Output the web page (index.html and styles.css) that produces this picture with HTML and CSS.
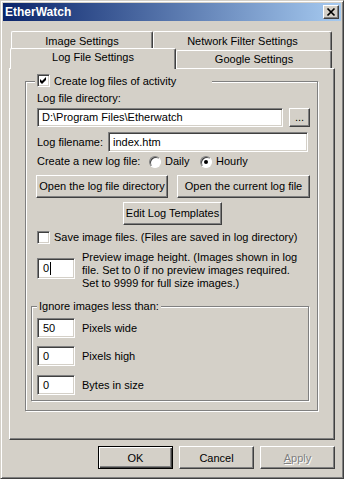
FILE: index.html
```html
<!DOCTYPE html>
<html>
<head>
<meta charset="utf-8">
<title>EtherWatch</title>
<link rel="stylesheet" href="styles.css">
</head>
<body>
<div class="window">
  <div class="titlebar">
    <span class="title">EtherWatch</span>
    <div class="close">
      <svg width="14" height="12" viewBox="0 0 14 12"><path d="M3.5 2.5 L10.5 9.5 M10.5 2.5 L3.5 9.5" stroke="#000" stroke-width="1.7" fill="none"/></svg>
    </div>
  </div>
  <div class="tabs">
    <div class="tabrow row1">
      <div class="tab t-image">Image Settings</div>
      <div class="tab t-network">Network Filter Settings</div>
    </div>
    <div class="tabrow row2">
      <div class="tab t-log">Log File Settings</div>
      <div class="tab t-google">Google Settings</div>
    </div>
  </div>
  <div class="panel">
    <fieldset class="group main">
      <legend class="check-legend"><span class="checkbox"><svg width="11" height="11" viewBox="0 0 11 11"><path d="M2 4 L4 6 L8 2 L8 5 L4 9 L2 7 Z" fill="#000"/></svg></span><span>Create log files of activity</span></legend>
      <div class="label">Log file directory:</div>
      <div class="row dir-row">
        <div class="edit dir">D:\Program Files\Etherwatch</div>
        <div class="btn browse">...</div>
      </div>
      <div class="row file-row">
        <span class="file-label">Log filename:</span>
        <div class="edit filename">index.htm</div>
      </div>
      <div class="row radio-row">
        <span class="radio-label">Create a new log file:</span>
        <span class="opt daily"><span class="radio"></span>Daily</span>
        <span class="opt"><span class="radio on"></span>Hourly</span>
      </div>
      <div class="row btn-row">
        <div class="btn first">Open the log file directory</div>
        <div class="btn second">Open the current log file</div>
      </div>
      <div class="btn templates">Edit Log Templates</div>
      <div class="row save-row">
        <span class="checkbox"></span>
        <span>Save image files. (Files are saved in log directory)</span>
      </div>
      <div class="row preview-row">
        <div class="edit small preview">0<span class="caret"></span></div>
        <div class="preview-text">Preview image height. (Images shown in log<br>file. Set to 0 if no preview images required.<br>Set to 9999 for full size images.)</div>
      </div>
      <fieldset class="group ignore">
        <legend class="plain-legend">Ignore images less than:</legend>
        <div class="row size-row r1"><div class="edit small">50</div><span>Pixels wide</span></div>
        <div class="row size-row r2"><div class="edit small">0</div><span>Pixels high</span></div>
        <div class="row size-row r3"><div class="edit small">0</div><span>Bytes in size</span></div>
      </fieldset>
    </fieldset>
  </div>
  <div class="actions">
    <div class="btn action default">OK</div>
    <div class="btn action">Cancel</div>
    <div class="btn action disabled"><span><u>A</u>pply</span></div>
  </div>
</div>
</body>
</html>
```
FILE: styles.css
```css
html, body {
  margin: 0;
  padding: 0;
  background: #d4d0c8;
}
body {
  font-family: "Liberation Sans", Arial, sans-serif;
  font-size: 11px;
  color: #000;
}
.window {
  box-sizing: border-box;
  width: 344px;
  height: 479px;
  background: #d4d0c8;
  border: 1px solid;
  border-color: #d4d0c8 #404040 #404040 #d4d0c8;
  box-shadow: inset 1px 1px #fff, inset -1px -1px #808080;
  padding: 2px;
  display: flex;
  flex-direction: column;
}
.titlebar {
  height: 18px;
  flex: none;
  display: flex;
  align-items: center;
  justify-content: space-between;
  padding: 0 2px;
  background: linear-gradient(to right, #0a246a, #a6caf0);
}
.title {
  color: #fff;
  font-weight: bold;
  font-size: 12px;
}
.close {
  box-sizing: border-box;
  width: 16px;
  height: 14px;
  background: #d4d0c8;
  border: 1px solid;
  border-color: #fff #404040 #404040 #fff;
  box-shadow: inset -1px -1px #808080;
  display: flex;
}
.tabs {
  margin-top: 10px;
  flex: none;
}
.tabrow {
  display: flex;
}
.row1 {
  height: 19px;
  margin-left: 8px;
}
.row2 {
  height: 18px;
  margin-left: 7px;
}
.tab {
  box-sizing: border-box;
  background: #d4d0c8;
  border-left: 1px solid #fff;
  border-top: 1px solid #fff;
  border-right: 1px solid #404040;
  box-shadow: inset -1px 0 #808080;
  border-radius: 2px 2px 0 0;
  text-align: center;
  white-space: nowrap;
}
.row1 .tab {
  height: 19px;
  line-height: 18px;
}
.t-image { width: 142px; }
.t-network { width: 179px; }
.t-log {
  width: 166px;
  height: 21px;
  margin-top: -2px;
  line-height: 17px;
  position: relative;
  z-index: 1;
}
.t-google {
  width: 156px;
  height: 18px;
  line-height: 17px;
}
.panel {
  box-sizing: border-box;
  height: 372px;
  margin: 0 6px;
  flex: none;
  border: 1px solid;
  border-color: #fff #404040 #404040 #fff;
  box-shadow: inset -1px -1px #808080;
}
.group {
  box-sizing: border-box;
  min-width: 0;
  border: 1px solid #808080;
  box-shadow: inset 1px 1px #fff, 1px 1px #fff;
  line-height: 13px;
}
.main {
  margin: 5px 16px 0 15px;
  padding: 4px 7px 9px 11px;
}
.check-legend {
  box-sizing: border-box;
  width: 177px;
  height: 14px;
  margin-left: -2px;
  padding: 0 2px;
  background: #d4d0c8;
  display: flex;
  align-items: flex-start;
  gap: 4px;
  line-height: 14px;
}
.plain-legend {
  height: 13px;
  padding: 0 2px;
  background: #d4d0c8;
  line-height: 13px;
}
.checkbox {
  box-sizing: border-box;
  flex: none;
  width: 13px;
  height: 13px;
  border: 1px solid;
  border-color: #808080 #fff #fff #808080;
  box-shadow: inset 1px 1px #404040, inset -1px -1px #d4d0c8;
  background: #fff;
  display: flex;
}
.label {
  height: 13px;
}
.row {
  display: flex;
  align-items: center;
}
.edit {
  box-sizing: border-box;
  background: #fff;
  border: 1px solid;
  border-color: #808080 #fff #fff #808080;
  box-shadow: inset 1px 1px #404040, inset -1px -1px #d4d0c8;
  padding-left: 4px;
  display: flex;
  align-items: center;
  white-space: nowrap;
}
.btn {
  box-sizing: border-box;
  background: #d4d0c8;
  border: 1px solid;
  border-color: #fff #404040 #404040 #fff;
  box-shadow: inset -1px -1px #808080;
  display: flex;
  align-items: center;
  justify-content: center;
  white-space: nowrap;
}
.dir-row {
  margin-top: 3px;
  height: 19px;
  gap: 6px;
}
.dir {
  width: 246px;
  height: 19px;
}
.browse {
  width: 21px;
  height: 19px;
}
.file-row {
  margin-top: 5px;
  height: 20px;
}
.file-label {
  width: 71px;
  flex: none;
}
.filename {
  width: 200px;
  height: 20px;
}
.radio-row {
  margin-top: 3px;
  height: 13px;
}
.radio-label {
  width: 112px;
  flex: none;
}
.opt {
  display: flex;
  align-items: center;
  gap: 4px;
}
.daily {
  width: 51px;
}
.radio {
  box-sizing: border-box;
  width: 12px;
  height: 12px;
  border-radius: 50%;
  border: 1px solid;
  border-color: #808080 #fff #fff #808080;
  box-shadow: inset 1px 1px #404040;
  background: #fff;
  display: flex;
  align-items: center;
  justify-content: center;
}
.radio.on::after {
  content: "";
  width: 4px;
  height: 4px;
  border-radius: 50%;
  background: #000;
}
.btn-row {
  margin-top: 7px;
  height: 23px;
}
.first {
  width: 132px;
  height: 23px;
  margin-left: -1px;
}
.second {
  width: 133px;
  height: 23px;
  margin-left: 9px;
}
.templates {
  margin-top: 4px;
  margin-left: 86px;
  width: 99px;
  height: 23px;
}
.save-row {
  margin-top: 6px;
  height: 13px;
  gap: 4px;
}
.preview-row {
  margin-top: 7px;
  align-items: flex-start;
  gap: 7px;
}
.small {
  width: 38px;
  height: 20px;
  padding-left: 5px;
}
.preview {
  height: 21px;
  margin-top: 7px;
}
.caret {
  display: inline-block;
  width: 1px;
  height: 13px;
  background: #000;
  margin-left: 1px;
}
.preview-text {
  line-height: 13px;
  white-space: nowrap;
}
.ignore {
  width: 278px;
  margin: 10px 0 0 -6px;
  padding: 5px 5px 5px 5px;
}
.size-row {
  height: 20px;
  gap: 7px;
}
.size-row.r2 { margin-top: 8px; }
.size-row.r3 { margin-top: 9px; }
.actions {
  display: flex;
  justify-content: flex-end;
  gap: 6px;
  margin: 6px 6px 0 0;
}
.action {
  width: 75px;
  height: 23px;
}
.default {
  border: 1px solid #000;
  box-shadow: inset 1px 1px #fff, inset -1px -1px #404040, inset -2px -2px #808080;
}
.disabled {
  color: #808080;
  text-shadow: 1px 1px 0 #fff;
}
```
